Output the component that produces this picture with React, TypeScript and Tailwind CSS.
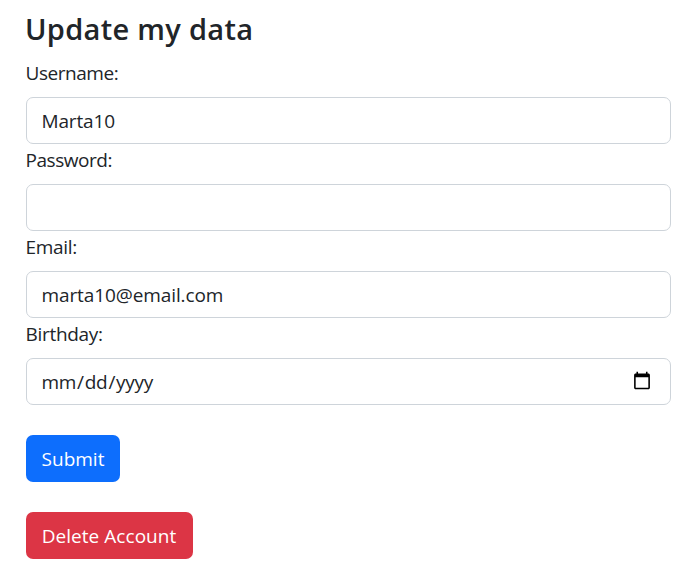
type FieldProps = {
  id: string;
  label: string;
  type: string;
  value?: string;
  labelClass: string;
  inputClass?: string;
};

function Field({ id, label, type, value, labelClass, inputClass = "pr-[15px]" }: FieldProps) {
  return (
    <div className="flex flex-col items-start">
      <label htmlFor={id} className={`-ml-[0.5px] h-10 pt-px text-[19px] leading-[30px] ${labelClass}`}>
        {label}
      </label>
      <input
        id={id}
        type={type}
        defaultValue={value}
        className={`block h-[47px] w-full rounded-[7px] border border-[#ced4da] bg-white pl-[14.5px] text-[19px] text-[#212529] outline-none ${inputClass}`}
      />
    </div>
  );
}

export default function App() {
  return (
    <main className="min-h-[582px] w-full bg-white pr-[25px] pl-[26px] pt-[11px] font-['Open_Sans','Noto_Sans',sans-serif] text-[#212529]">
      <h1 className="mb-2.5 -ml-px text-[29px] leading-9 font-semibold tracking-[0.3px]">Update my data</h1>
      <form onSubmit={(event) => event.preventDefault()}>
        <Field id="username" label="Username:" type="text" value="Marta10" labelClass="tracking-[-0.45px]" inputClass="pr-[15px] tracking-[-0.15px]" />
        <Field id="password" label="Password:" type="password" labelClass="tracking-[-0.45px]" />
        <Field id="email" label="Email:" type="text" value="marta10@email.com" labelClass="tracking-[-0.3px]" inputClass="pr-[15px] tracking-[-0.1px]" />
        <Field
          id="birthday"
          label="Birthday:"
          type="date"
          labelClass="tracking-[-0.3px]"
          inputClass="pr-[18px] tracking-[-0.3px] [&::-webkit-datetime-edit]:-ml-px [&::-webkit-datetime-edit]:pt-px [&::-webkit-calendar-picker-indicator]:mb-px [&::-webkit-calendar-picker-indicator]:size-5 [&::-webkit-calendar-picker-indicator]:p-0"
        />
        <div className="mt-[30px] flex flex-col items-start gap-[30px] text-[19px] text-white">
          <button type="submit" className="h-[47px] w-[94px] rounded-[7px] bg-[#0d6efd] pt-0.5">
            Submit
          </button>
          <button type="button" className="h-[47px] w-[167px] rounded-[7px] bg-[#dc3545] pt-0.5 pr-px tracking-[0.05px] whitespace-nowrap">
            Delete Account
          </button>
        </div>
      </form>
    </main>
  );
}
